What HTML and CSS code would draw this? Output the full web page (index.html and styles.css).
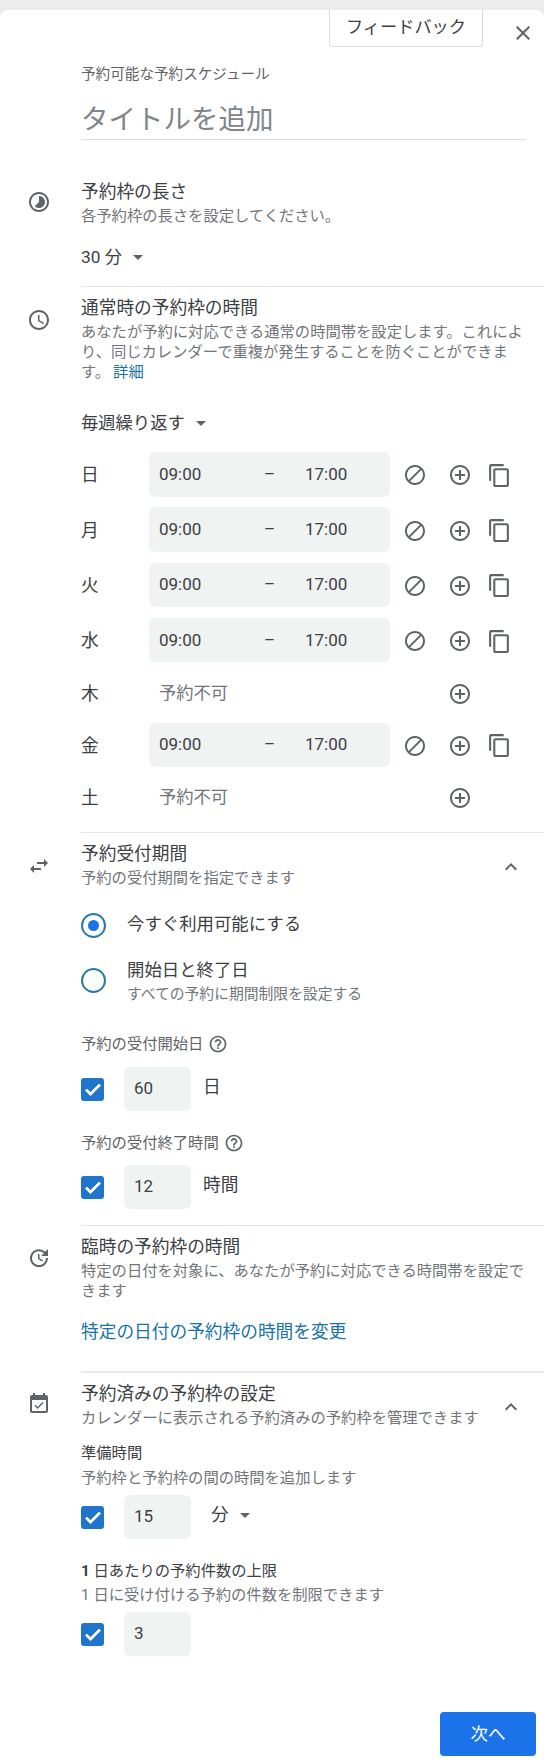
FILE: index.html
```html
<!DOCTYPE html>
<html lang="ja">
<head>
<meta charset="utf-8">
<title>予約可能な予約スケジュール</title>
<link rel="stylesheet" href="styles.css">
</head>
<body>
<div class="panel">
  <header class="topbar">
    <button class="feedback">フィードバック</button>
    <svg class="close" viewBox="0 0 24 24"><path d="M19 6.41L17.59 5 12 10.59 6.41 5 5 6.41 10.59 12 5 17.59 6.41 19 12 13.41 17.59 19 19 17.59 13.41 12z"/></svg>
  </header>
  <div class="intro">
    <div class="eyebrow">予約可能な予約スケジュール</div>
    <div class="doc-title">タイトルを追加</div>
  </div>

  <section class="section s1">
    <svg class="sec-icon" viewBox="0 0 24 24"><path d="M16.24 7.76C15.07 6.59 13.54 6 12 6v6l-4.24 4.24c2.34 2.34 6.14 2.34 8.49 0 2.34-2.34 2.34-6.14-.01-8.48zM12 2C6.48 2 2 6.48 2 12s4.48 10 10 10 10-4.48 10-10S17.52 2 12 2zm0 18c-4.42 0-8-3.58-8-8s3.58-8 8-8 8 3.58 8 8-3.58 8-8 8z"/></svg>
    <div class="main pb18">
      <h2 class="title">予約枠の長さ</h2>
      <p class="desc">各予約枠の長さを設定してください。</p>
      <div class="dropdown mt19">30 分<span class="caret"></span></div>
    </div>
  </section>

  <section class="section s2">
    <svg class="sec-icon" viewBox="0 0 24 24"><path d="M11.99 2C6.47 2 2 6.48 2 12s4.47 10 9.99 10C17.52 22 22 17.52 22 12S17.52 2 11.99 2zM12 20c-4.42 0-8-3.58-8-8s3.58-8 8-8 8 3.58 8 8-3.58 8-8 8zm.5-13H11v6l5.25 3.15.75-1.23-4.5-2.67z"/></svg>
    <div class="main pb16">
      <h2 class="title">通常時の予約枠の時間</h2>
      <p class="desc">あなたが予約に対応できる通常の時間帯を設定します。これにより、同じカレンダーで重複が発生することを防ぐことができます。<a class="inline-link">詳細</a></p>
      <div class="dropdown mt29">毎週繰り返す<span class="caret"></span></div>
      <div class="days">
        <div class="day"><span class="day-name">日</span><div class="slot"><span>09:00</span><span class="dash">–</span><span class="end">17:00</span></div><div class="actions"><svg viewBox="0 0 24 24" class="ic"><use href="#ban"/></svg><svg viewBox="0 0 24 24" class="ic"><use href="#plus"/></svg><svg viewBox="0 0 24 24" class="ic copy"><use href="#copy"/></svg></div></div>
        <div class="day"><span class="day-name">月</span><div class="slot"><span>09:00</span><span class="dash">–</span><span class="end">17:00</span></div><div class="actions"><svg viewBox="0 0 24 24" class="ic"><use href="#ban"/></svg><svg viewBox="0 0 24 24" class="ic"><use href="#plus"/></svg><svg viewBox="0 0 24 24" class="ic copy"><use href="#copy"/></svg></div></div>
        <div class="day"><span class="day-name">火</span><div class="slot"><span>09:00</span><span class="dash">–</span><span class="end">17:00</span></div><div class="actions"><svg viewBox="0 0 24 24" class="ic"><use href="#ban"/></svg><svg viewBox="0 0 24 24" class="ic"><use href="#plus"/></svg><svg viewBox="0 0 24 24" class="ic copy"><use href="#copy"/></svg></div></div>
        <div class="day"><span class="day-name">水</span><div class="slot"><span>09:00</span><span class="dash">–</span><span class="end">17:00</span></div><div class="actions"><svg viewBox="0 0 24 24" class="ic"><use href="#ban"/></svg><svg viewBox="0 0 24 24" class="ic"><use href="#plus"/></svg><svg viewBox="0 0 24 24" class="ic copy"><use href="#copy"/></svg></div></div>
        <div class="day off"><span class="day-name">木</span><div class="slot-off">予約不可</div><div class="actions"><svg viewBox="0 0 24 24" class="ic col2"><use href="#plus"/></svg></div></div>
        <div class="day"><span class="day-name">金</span><div class="slot"><span>09:00</span><span class="dash">–</span><span class="end">17:00</span></div><div class="actions"><svg viewBox="0 0 24 24" class="ic"><use href="#ban"/></svg><svg viewBox="0 0 24 24" class="ic"><use href="#plus"/></svg><svg viewBox="0 0 24 24" class="ic copy"><use href="#copy"/></svg></div></div>
        <div class="day off"><span class="day-name">土</span><div class="slot-off">予約不可</div><div class="actions"><svg viewBox="0 0 24 24" class="ic col2"><use href="#plus"/></svg></div></div>
      </div>
    </div>
  </section>

  <section class="section s3">
    <svg class="sec-icon" viewBox="0 0 24 24"><path d="M6.99 11L3 15l3.99 4v-3H14v-2H6.99v-3zM21 9l-3.99-4v3H10v2h7.01v3L21 9z"/></svg>
    <div class="main pb16">
      <div class="head">
        <div><h2 class="title">予約受付期間</h2><p class="desc">予約の受付期間を指定できます</p></div>
        <svg class="chevron" viewBox="0 0 24 24"><path d="M12 8l-6 6 1.41 1.41L12 10.83l4.59 4.58L18 14z"/></svg>
      </div>
      <div class="radio r1"><span class="radio-mark on"></span><div class="radio-label">今すぐ利用可能にする</div></div>
      <div class="radio r2"><span class="radio-mark"></span><div><div class="radio-label">開始日と終了日</div><p class="desc small">すべての予約に期間制限を設定する</p></div></div>
      <div class="label mt30">予約の受付開始日<svg class="help" viewBox="0 0 24 24"><use href="#help"/></svg></div>
      <div class="field mt14"><span class="check"><svg viewBox="0 0 24 24"><use href="#tick"/></svg></span><span class="num">60</span><span class="unit">日</span></div>
      <div class="label mt20">予約の受付終了時間<svg class="help" viewBox="0 0 24 24"><use href="#help"/></svg></div>
      <div class="field mt13"><span class="check"><svg viewBox="0 0 24 24"><use href="#tick"/></svg></span><span class="num">12</span><span class="unit">時間</span></div>
    </div>
  </section>

  <section class="section s4">
    <svg class="sec-icon" viewBox="0 0 24 24"><path d="M21 10.12h-6.78l2.74-2.82c-2.73-2.7-7.15-2.8-9.88-.1-2.73 2.71-2.73 7.08 0 9.79s7.15 2.71 9.88 0C18.32 15.65 19 14.08 19 12.1h2c0 1.98-.88 4.55-2.64 6.29-3.51 3.48-9.21 3.48-12.72 0-3.5-3.47-3.53-9.11-.02-12.58s9.14-3.47 12.65 0L21 3v7.12zM12.5 8v4.25l3.5 2.08-.72 1.21L11 13V8h1.5z"/></svg>
    <div class="main pb28 thick">
      <h2 class="title">臨時の予約枠の時間</h2>
      <p class="desc">特定の日付を対象に、あなたが予約に対応できる時間帯を設定できます</p>
      <a class="big-link">特定の日付の予約枠の時間を変更</a>
    </div>
  </section>

  <section class="section s5">
    <svg class="sec-icon" viewBox="0 0 24 24"><path d="M16.53 11.06L15.47 10l-4.88 4.88-2.12-2.12-1.06 1.06L10.59 17l5.94-5.94zM19 3h-1V1h-2v2H8V1H6v2H5c-1.11 0-1.99.9-1.99 2L3 19c0 1.1.89 2 2 2h14c1.1 0 2-.9 2-2V5c0-1.1-.9-2-2-2zm0 16H5V8h14v11z"/></svg>
    <div class="main plain">
      <div class="head">
        <div><h2 class="title">予約済みの予約枠の設定</h2><p class="desc">カレンダーに表示される予約済みの予約枠を管理できます</p></div>
        <svg class="chevron" viewBox="0 0 24 24"><path d="M12 8l-6 6 1.41 1.41L12 10.83l4.59 4.58L18 14z"/></svg>
      </div>
      <div class="sub-title mt15">準備時間</div>
      <p class="desc mt5">予約枠と予約枠の間の時間を追加します</p>
      <div class="field mt8"><span class="check"><svg viewBox="0 0 24 24"><use href="#tick"/></svg></span><span class="num">15</span><span class="unit drop">分<span class="caret"></span></span></div>
      <div class="sub-title mt20"><span class="strong">1</span> 日あたりの予約件数の上限</div>
      <p class="desc mt4">1 日に受け付ける予約の件数を制限できます</p>
      <div class="field mt8"><span class="check"><svg viewBox="0 0 24 24"><use href="#tick"/></svg></span><span class="num">3</span></div>
    </div>
  </section>

  <footer class="footer"><button class="next">次へ</button></footer>
</div>

<svg class="defs" aria-hidden="true">
  <defs>
    <path id="ban" d="M12 2C6.48 2 2 6.48 2 12s4.48 10 10 10 10-4.48 10-10S17.52 2 12 2zM4 12c0-4.42 3.58-8 8-8 1.85 0 3.55.63 4.9 1.69L5.69 16.9C4.63 15.55 4 13.85 4 12zm8 8c-1.85 0-3.55-.63-4.9-1.69L18.31 7.1C19.37 8.45 20 10.15 20 12c0 4.42-3.58 8-8 8z"/>
    <path id="plus" d="M13 7h-2v4H7v2h4v4h2v-4h4v-2h-4V7zm-1-5C6.48 2 2 6.48 2 12s4.48 10 10 10 10-4.48 10-10S17.52 2 12 2zm0 18c-4.41 0-8-3.59-8-8s3.59-8 8-8 8 3.59 8 8-3.59 8-8 8z"/>
    <path id="copy" d="M16 1H4c-1.1 0-2 .9-2 2v14h2V3h12V1zm3 4H8c-1.1 0-2 .9-2 2v14c0 1.1.9 2 2 2h11c1.1 0 2-.9 2-2V7c0-1.1-.9-2-2-2zm0 16H8V7h11v14z"/>
    <path id="help" d="M11 18h2v-2h-2v2zm1-16C6.48 2 2 6.48 2 12s4.48 10 10 10 10-4.48 10-10S17.52 2 12 2zm0 18c-4.41 0-8-3.59-8-8s3.59-8 8-8 8 3.59 8 8-3.59 8-8 8zm0-14c-2.21 0-4 1.79-4 4h2c0-1.1.9-2 2-2s2 .9 2 2c0 2-3 1.75-3 5h2c0-2.25 3-2.5 3-5 0-2.21-1.79-4-4-4z"/>
    <path id="tick" d="M9 16.2L4.8 12l-1.9 1.9L9 20 21.1 7.9 19.2 6z"/>
  </defs>
</svg>
</body>
</html>
```
FILE: styles.css
```css
* { box-sizing: border-box; }
html, body { margin: 0; padding: 0; }
body {
  background: #ececec;
  padding-top: 10px;
  font-family: Roboto, "Noto Sans CJK JP", sans-serif;
  color: #3c4043;
}
.defs { display: none; }
h2, p { margin: 0; font-weight: 400; }
.panel { background: #fff; border-radius: 8px 8px 0 0; height: 1754px; }

.topbar { display: flex; justify-content: flex-end; align-items: flex-start; padding-right: 9px; }
.feedback {
  width: 154px; height: 37px; padding: 0 0 3px;
  background: #fff; color: #3c4043;
  border: 1px solid #dadce0; border-top: 0; border-radius: 0 0 4px 4px;
  font: 400 17.2px/20px Roboto, "Noto Sans CJK JP", sans-serif;
}
.close { width: 24px; height: 24px; margin: 10.5px 0 0 28px; fill: #5f6368; }

.intro { padding-left: 81px; padding-right: 18px; }
.eyebrow { margin-top: 17px; font-size: 14.6px; line-height: 20px; color: #5f6368; }
.doc-title {
  margin-top: 17px; height: 39px;
  font-size: 27.5px; line-height: 38px; color: #80868b;
  border-bottom: 1px solid #dadce0;
}

.section { display: flex; align-items: flex-start; }
.sec-icon { flex: none; width: 24px; height: 24px; margin: 0 0 0 26.5px; fill: #5f6368; }
.main { flex: 1; min-width: 0; margin-left: 30.5px; border-bottom: 1px solid #e3e4e6; }
.main.plain { border-bottom: 0; }
.main.thick { border-bottom: 2px solid #e8eaed; }
.s1 { padding-top: 37px; }
.s1 .sec-icon { margin-top: 13px; }
.s2 { padding-top: 6px; }
.s2 .sec-icon { margin-top: 15px; }
.s3 { padding-top: 6px; }
.s3 .sec-icon { margin-top: 15px; }
.s4 { padding-top: 5.5px; }
.s4 .sec-icon { margin-top: 14.5px; }
.s5 { padding-top: 6px; }
.s5 .sec-icon { margin-top: 13px; }
.pb18 { padding-bottom: 18px; }
.pb16 { padding-bottom: 16px; }
.pb28 { padding-bottom: 27px; }

.title { padding-top: 2px; font-size: 17.7px; line-height: 26px; color: #3c4043; }
.desc { padding-top: 1px; margin-bottom: -1px; font-size: 15.3px; line-height: 20px; color: #70757a; max-width: 450px; }
.desc.small { font-size: 14.8px; }
.inline-link { margin-left: 3px; color: #1a73a8; }

.dropdown { display: flex; align-items: center; gap: 11px; padding-top: 1px; margin-bottom: -1px; font-size: 17.3px; line-height: 24px; color: #3c4043; }
.caret { display: inline-block; width: 0; height: 0; border-left: 5px solid transparent; border-right: 5px solid transparent; border-top: 5px solid #5f6368; }

.mt4 { margin-top: 4px; }
.mt5 { margin-top: 5px; }
.mt8 { margin-top: 8px; }
.mt13 { margin-top: 13px; }
.mt14 { margin-top: 14px; }
.mt15 { margin-top: 15px; }
.mt19 { margin-top: 19px; }
.mt20 { margin-top: 20.5px; }
.mt29 { margin-top: 29px; }
.mt30 { margin-top: 30px; }

.days { margin-top: 18px; display: flex; flex-direction: column; gap: 10.83px; }
.day { display: flex; align-items: center; height: 44.5px; }
.day.off { height: 38.5px; }
.day-name { width: 68px; flex: none; padding-top: 2px; font-size: 17.7px; line-height: 24px; color: #3c4043; }
.slot {
  flex: none; width: 241px; height: 44.5px; padding: 0 0 1px 10px;
  display: grid; grid-template-columns: 105px 10px auto; align-items: center; justify-content: start;
  background: #eff3f1; border-radius: 6px;
  font-size: 17px; color: #3c4043;
}
.dash { text-align: center; }
.end { margin-left: 31px; }
.slot-off { flex: none; width: 241px; padding-left: 10px; font-size: 17.3px; line-height: 24px; color: #70757a; }
.actions { display: grid; grid-template-columns: 45px 45px 34px; margin: 2px 0 0 2.5px; align-items: center; justify-items: center; }
.ic { width: 24px; height: 24px; fill: #5f6368; }
.ic.copy { width: 25px; height: 25px; }
.ic.col2 { grid-column: 2; }

.head { display: flex; justify-content: space-between; align-items: center; padding-right: 26px; }
.chevron { width: 24px; height: 24px; margin: 8px -5px 0 -1px; fill: #5f6368; flex: none; }

.radio { display: flex; align-items: flex-start; gap: 21px; }
.r1 { margin-top: 22px; }
.r2 { margin-top: 17px; }
.radio-mark { flex: none; width: 25px; height: 25px; border: 2.5px solid #2c7aa6; border-radius: 50%; display: flex; align-items: center; justify-content: center; }
.r1 .radio-mark { margin-top: 3.5px; }
.r2 .radio-mark { margin-top: 13.5px; }
.radio-mark.on::after { content: ""; width: 11px; height: 11px; border-radius: 50%; background: #1a73e8; }
.radio-label { padding-top: 2px; font-size: 17.4px; line-height: 26px; color: #3c4043; }

.label { display: flex; align-items: center; gap: 5px; padding-top: 1px; margin-bottom: -1px; font-size: 15.3px; line-height: 20px; color: #5f6368; }
.help { width: 20px; height: 20px; fill: #5f6368; flex: none; }
.sub-title { padding-top: 1px; margin-bottom: -1px; font-size: 15.3px; line-height: 20px; color: #3c4043; }
.strong { font-weight: 700; }

.field { display: flex; align-items: center; height: 44.5px; }
.check { flex: none; width: 23px; height: 23px; border-radius: 3px; background: #1f74cc; display: flex; align-items: center; justify-content: center; }
.check svg { width: 20px; height: 20px; fill: #fff; stroke: #fff; stroke-width: 1; }
.num {
  flex: none; width: 67px; height: 44.5px; margin-left: 20px; padding: 0 0 2px 10px;
  display: flex; align-items: center;
  background: #eff3f1; border-radius: 6px;
  font-size: 17px; color: #3c4043;
}
.unit { margin: 0 0 4px 12px; font-size: 17.7px; line-height: 24px; color: #3c4043; }
.unit.drop { margin-left: 20px; display: flex; align-items: center; gap: 11px; }

.big-link { display: block; margin-top: 20px; font-size: 17.7px; line-height: 24px; color: #1a73a8; }

.footer { display: flex; justify-content: flex-end; padding: 55.2px 8px 0 0; }
.next {
  width: 96px; height: 44.7px; padding: 0;
  background: #1a73e8; color: #fff;
  border: 0; border-radius: 4px;
  font: 400 17.5px/20px Roboto, "Noto Sans CJK JP", sans-serif;
}
```
